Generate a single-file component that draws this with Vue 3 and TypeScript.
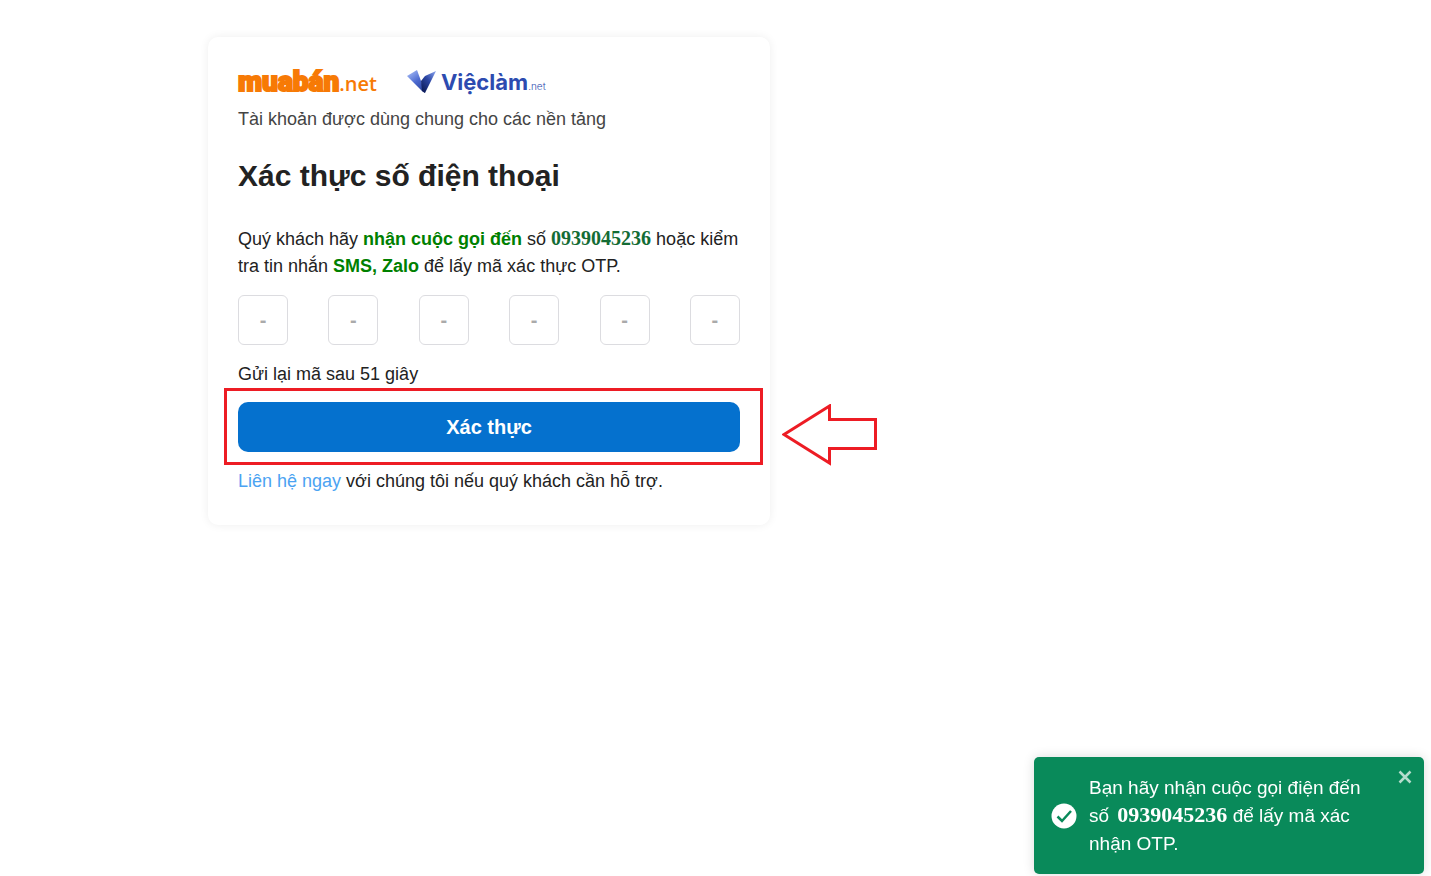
<script setup lang="ts">
import { ref } from 'vue'

const phone = '0939045236'
const secondsLeft = ref(51)
const digits = ref<string[]>(['', '', '', '', '', ''])
const toastOpen = ref(true)
</script>

<template>
  <main class="page">
    <form class="card" @submit.prevent>
      <div class="logos">
        <span class="muaban"><b>muabán</b><span>.net</span></span>
        <span class="vieclam">
          <svg class="wing" viewBox="0 0 30 24" aria-hidden="true">
            <defs>
              <linearGradient id="wing-left" x1="0.2" y1="0" x2="0.8" y2="1">
                <stop offset="0" stop-color="#a3b9f5" />
                <stop offset="0.5" stop-color="#4c6ad0" />
                <stop offset="1" stop-color="#2a429c" />
              </linearGradient>
              <linearGradient id="wing-right" x1="1" y1="0" x2="0.2" y2="1">
                <stop offset="0" stop-color="#8da8f2" />
                <stop offset="0.5" stop-color="#2c46a4" />
                <stop offset="1" stop-color="#0c1b56" />
              </linearGradient>
            </defs>
            <path d="M0 6 L10 0 L14 11 L18 23 L15 21 Z" fill="url(#wing-left)" />
            <path d="M29 1 L18 23 L15 21 L14 11 L18 6 Z" fill="url(#wing-right)" />
          </svg>
          <b>Việclàm</b><small>.net</small>
        </span>
      </div>
      <p class="shared">Tài khoản được dùng chung cho các nền tảng</p>
      <h1>Xác thực số điện thoại</h1>
      <p>
        Quý khách hãy <strong>nhận cuộc gọi đến</strong> số
        <b class="phone">{{ phone }}</b> hoặc kiểm tra tin nhắn
        <strong>SMS, Zalo</strong> để lấy mã xác thực OTP.
      </p>
      <div class="otp">
        <input
          v-for="(_, i) in digits"
          :key="i"
          v-model="digits[i]"
          type="text"
          inputmode="numeric"
          maxlength="1"
          placeholder="-"
          :aria-label="`Số thứ ${i + 1}`"
        />
      </div>
      <p>Gửi lại mã sau {{ secondsLeft }} giây</p>
      <div class="action">
        <button class="submit" type="submit">Xác thực</button>
        <span class="frame"></span>
        <svg class="arrow" viewBox="0 0 96 62" aria-hidden="true">
          <path d="M2 30.500 L47.500 2 V15.500 H93.500 V44.500 H47.500 V59 Z" />
        </svg>
      </div>
      <p><a href="#">Liên hệ ngay</a> với chúng tôi nếu quý khách cần hỗ trợ.</p>
    </form>

    <div v-if="toastOpen" class="toast" role="status">
      <svg class="check" viewBox="0 0 26 26" aria-hidden="true">
        <circle cx="13" cy="13" r="12.500" />
        <path d="M6.500 13.500 L11 18 L20 8" />
      </svg>
      <p>Bạn hãy nhận cuộc gọi điện đến số <b>{{ phone }}</b> để lấy mã xác nhận OTP.</p>
      <button class="close" type="button" aria-label="Đóng" @click="toastOpen = false">
        <svg viewBox="0 0 14 14" aria-hidden="true"><path d="M1.500 1.500 L12.500 12.500 M12.500 1.500 L1.500 12.500" /></svg>
      </button>
    </div>
  </main>
</template>

<style>
body {
  margin: 0;
  background: #fff;
}
</style>

<style scoped>
.page {
  padding: 37px 24px 37px 208px;
  font: 18px/27px "Liberation Sans", Arial, sans-serif;
  color: #222;
}
.card {
  box-sizing: border-box;
  max-width: 562px;
  padding: 30px;
  border-radius: 10px;
  background: #fff;
  box-shadow: 0 0 10px rgba(0, 0, 0, 0.07);
}
p {
  margin: 0;
}
.logos {
  display: flex;
  align-items: flex-start;
  gap: 30px;
  height: 31px;
  margin-bottom: 8px;
  line-height: 30px;
  white-space: nowrap;
}
.muaban {
  color: #f77a05;
}
.muaban b {
  font: 900 28px/30px Roboto, sans-serif;
  -webkit-text-stroke: 2px #f77a05;
}
.muaban span {
  font: 600 20px/30px "Open Sans", sans-serif;
}
.vieclam {
  color: #2d4bb0;
}
.wing {
  width: 30px;
  height: 24px;
  margin-right: 4px;
  vertical-align: -4px;
}
.vieclam b {
  font: 700 22px/30px Inter, sans-serif;
}
.vieclam small {
  font: 300 10px/30px Inter, sans-serif;
}
.shared {
  color: #444;
}
h1 {
  margin: 23px 0 30px;
  font-size: 30px;
  line-height: 40px;
}
strong {
  color: green;
}
.phone {
  color: #146c35;
  font-family: "Liberation Serif", "Times New Roman", serif;
  font-size: 20px;
  line-height: 20px;
}
.otp {
  display: flex;
  justify-content: space-between;
  margin: 15px 0 16px;
}
.otp input {
  box-sizing: border-box;
  width: 50px;
  height: 50px;
  padding: 0;
  border: 1px solid #dcdce0;
  border-radius: 6px;
  background: #fff;
  color: #222;
  font: 20px "Liberation Sans", Arial, sans-serif;
  text-align: center;
}
.otp input::placeholder {
  color: #aaa;
  font-weight: bold;
}
.action {
  position: relative;
  margin: 14px 0 16px;
}
.submit {
  display: block;
  width: 100%;
  height: 50px;
  border: 0;
  border-radius: 10px;
  background: #0571ce;
  color: #fff;
  font: bold 20px "Liberation Sans", Arial, sans-serif;
}
.frame {
  position: absolute;
  inset: -14px -23px -13px -14px;
  border: 3px solid #ed1c24;
  pointer-events: none;
}
.arrow {
  position: absolute;
  top: 2px;
  left: calc(100% + 42px);
  width: 96px;
  height: 62px;
  fill: none;
  stroke: #ed1c24;
  stroke-width: 3;
}
a {
  color: #4ba3f2;
  text-decoration: none;
}
.toast {
  position: fixed;
  right: 7px;
  bottom: 2px;
  box-sizing: border-box;
  display: flex;
  align-items: center;
  gap: 12px;
  width: 390px;
  padding: 17px 50px 16px 17px;
  border-radius: 5px;
  background: #098a5a;
  box-shadow: 0 0 12px rgba(0, 0, 0, 0.14);
  color: #fff;
  font-size: 19px;
  line-height: 28px;
}
.toast b {
  padding-left: 3px;
  font-family: "Liberation Serif", "Times New Roman", serif;
  font-size: 22px;
  line-height: 20px;
}
.check {
  flex: none;
  width: 26px;
  height: 26px;
  fill: #fff;
}
.check path {
  fill: none;
  stroke: #098a5a;
  stroke-width: 2.500;
}
.close {
  position: absolute;
  top: 13px;
  right: 12px;
  display: flex;
  padding: 0;
  border: 0;
  background: none;
}
.close svg {
  width: 14px;
  height: 14px;
  stroke: #b5dccd;
  stroke-width: 2.500;
}
</style>
